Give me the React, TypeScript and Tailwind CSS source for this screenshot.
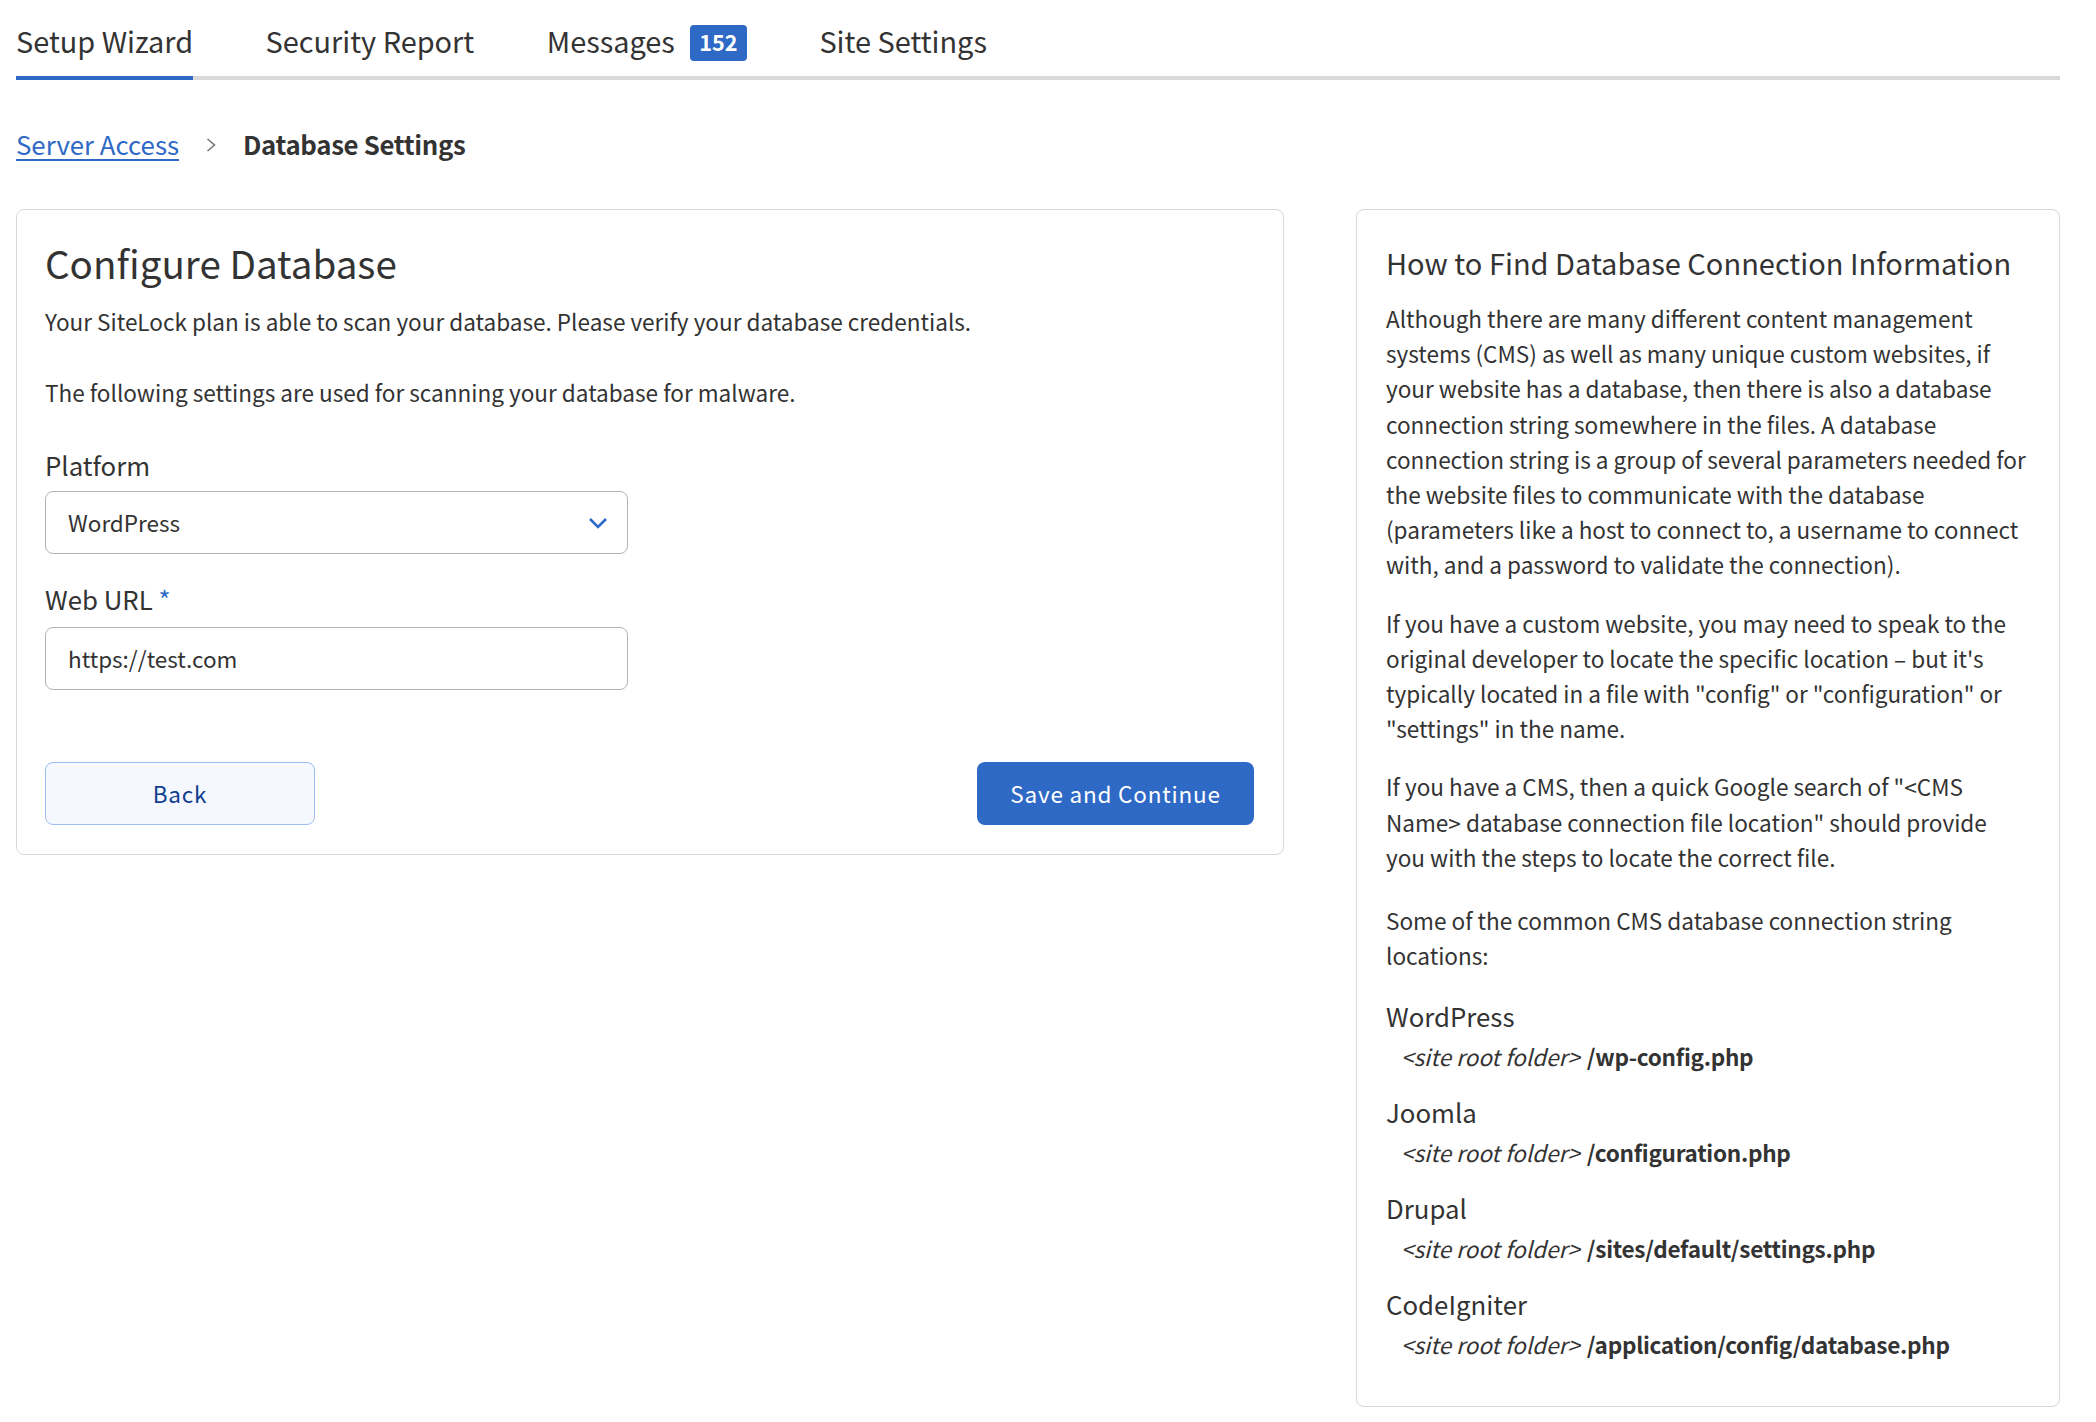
import { PropsWithChildren } from "react";

const tabs = ["Setup Wizard", "Security Report", "Messages", "Site Settings"];

const locations = [
  { name: "WordPress", path: "/wp-config.php" },
  { name: "Joomla", path: "/configuration.php" },
  { name: "Drupal", path: "/sites/default/settings.php" },
  { name: "CodeIgniter", path: "/application/config/database.php" },
];

function FormBox({ children }: PropsWithChildren) {
  return (
    <div className="mt-[9px] flex h-[63px] w-[583px] items-center justify-between rounded-[8px] border border-[#b3b3b3] bg-white pl-[22px] pr-[19px] text-[22.5px]">
      {children}
    </div>
  );
}

export default function App() {
  return (
    <div
      className="min-h-[1422px] w-[2096px] bg-white pl-[16px] text-[#333333]"
      style={{ fontFamily: '"Noto Sans CJK SC", "Noto Sans", sans-serif' }}
    >
      <div className="w-[2044px]">
        <nav className="flex h-[80px] gap-[72.5px] border-b-4 border-[#d9d9d9] text-[28.9px]">
          {tabs.map((tab, index) => (
            <div
              key={tab}
              className={
                index === 0
                  ? "-mb-[4px] flex h-[80px] items-center border-b-4 border-[#2f69c6] pt-[6px]"
                  : "-mb-[4px] flex h-[80px] items-center border-b-4 border-transparent pt-[6px]"
              }
            >
              {tab}
              {tab === "Messages" && (
                <span className="ml-[15px] mt-[3px] flex h-[36px] w-[57px] items-center justify-center rounded-[4px] bg-[#2f69c6] text-[21.6px] font-semibold text-white">
                  152
                </span>
              )}
            </div>
          ))}
        </nav>

        <div className="flex h-[129px] items-center text-[25.8px]">
          <a className="text-[#2f69c6] underline underline-offset-[4px]">Server Access</a>
          <svg className="ml-[27px] mr-[27px]" width="10" height="14" viewBox="0 0 10 14" fill="none">
            <path d="M1.5 1L8.5 7L1.5 13" stroke="#777777" strokeWidth="1.6" />
          </svg>
          <span className="font-semibold tracking-[-0.35px]">Database Settings</span>
        </div>

        <div className="flex items-start gap-[72px]">
          <section className="flex h-[646px] w-[1268px] flex-col rounded-[8px] border border-[#d9d9d9] pl-[28px] pr-[29px] pt-[26px]">
            <h1 className="text-[38.6px] leading-[52px]">Configure Database</h1>
            <p className="mt-[16px] text-[22.55px] leading-[35px]">
              Your SiteLock plan is able to scan your database. Please verify your database credentials.
            </p>
            <p className="mt-[36px] text-[22.55px] leading-[35px]">
              The following settings are used for scanning your database for malware.
            </p>

            <div className="mt-[37px]">
              <label className="block text-[25.8px] leading-[35px]">Platform</label>
              <FormBox>
                WordPress
                <svg width="20" height="12" viewBox="0 0 20 12" fill="none">
                  <path d="M2 2L10 10L18 2" stroke="#2f69c6" strokeWidth="2.6" />
                </svg>
              </FormBox>
            </div>

            <div className="mt-[27px]">
              <label className="block pb-[2px] text-[25.8px] leading-[35px]">
                Web URL <span className="text-[#2f69c6]">*</span>
              </label>
              <FormBox>https://test.com</FormBox>
            </div>

            <div className="mt-[72px] flex justify-between">
              <button className="h-[63px] w-[270px] rounded-[8px] border border-[#9dbdf0] bg-[#f5f8ff] text-[22.5px] tracking-[0.8px] text-[#0f3e8e]">
                Back
              </button>
              <button className="h-[63px] w-[277px] rounded-[8px] bg-[#2f69c6] text-[22.5px] tracking-[0.8px] text-white">
                Save and Continue
              </button>
            </div>
          </section>

          <aside className="h-[1198px] w-[704px] rounded-[8px] border border-[#d9d9d9] pl-[29px] pr-[31px] pt-[29px] text-[22.55px] leading-[35.2px]">
            <h2 className="whitespace-nowrap text-[29px] leading-[46px]">
              How to Find Database Connection Information
            </h2>
            <p className="mt-[16px]">
              Although there are many different content management systems (CMS) as well as many unique custom
              websites, if your website has a database, then there is also a database connection string somewhere
              in the files. A database connection string is a group of several parameters needed for the website
              files to communicate with the database (parameters like a host to connect to, a username to connect
              with, and a password to validate the connection).
            </p>
            <p className="mt-[23px]">
              If you have a custom website, you may need to speak to the original developer to locate the specific
              location – but it's typically located in a file with "config" or "configuration" or "settings" in the
              name.
            </p>
            <p className="mt-[23px]">
              If you have a CMS, then a quick Google search of "&lt;CMS Name&gt; database connection file location"
              should provide you with the steps to locate the correct file.
            </p>
            <p className="mt-[28px]">Some of the common CMS database connection string locations:</p>

            <div className="mt-[25px] flex flex-col gap-[19.5px]">
              {locations.map((item) => (
                <div key={item.name}>
                  <div className="text-[25.8px] leading-[36px]">{item.name}</div>
                  <div className="mt-[5px] pl-[15px]">
                    <em>&lt;site root folder&gt;</em>{" "}
                    <span className="ml-[2px] font-semibold tracking-[-0.28px]">{item.path}</span>
                  </div>
                </div>
              ))}
            </div>
          </aside>
        </div>
      </div>
    </div>
  );
}
